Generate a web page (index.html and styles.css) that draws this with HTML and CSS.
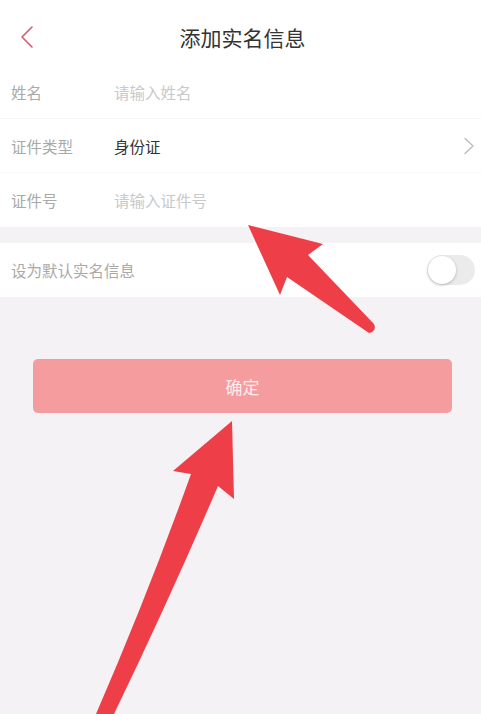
FILE: index.html
```html
<!DOCTYPE html>
<html lang="zh-CN">
<head>
<meta charset="utf-8">
<title>添加实名信息</title>
<link rel="stylesheet" href="styles.css">
</head>
<body>
<div class="page">
  <header class="topbar">
    <svg class="back" width="16" height="24" viewBox="0 0 16 24"><path d="M12 2 L2 12 L12 22" fill="none" stroke="#d45c70" stroke-width="1.6" stroke-linecap="round" stroke-linejoin="round"/></svg>
    <h1 class="title">添加实名信息</h1>
  </header>
  <section class="group">
    <div class="row">
      <span class="label">姓名</span>
      <span class="placeholder">请输入姓名</span>
    </div>
    <div class="row">
      <span class="label">证件类型</span>
      <span class="value">身份证</span>
      <svg class="chev" width="12" height="18" viewBox="0 0 12 18"><path d="M2 1.5 L10 9 L2 16.5" fill="none" stroke="#bdbdbd" stroke-width="1.4" stroke-linecap="round" stroke-linejoin="round"/></svg>
    </div>
    <div class="row last">
      <span class="label">证件号</span>
      <span class="placeholder">请输入证件号</span>
    </div>
  </section>
  <section class="group toggle-group">
    <div class="row last">
      <span class="label wide">设为默认实名信息</span>
      <span class="switch"><span class="knob"></span></span>
    </div>
  </section>
  <div class="btn">确定</div>
  <svg class="arrows" width="481" height="714" viewBox="0 0 481 714">
    <path d="M248 225 L323 244 L308 255 L374 324 Q377 331 369 333 L287 277 L280 295 Z" fill="#ee3e48"/>
    <path d="M232 421 L234 499 L218 486 Q170 598 114 714 L96 714 Q148 594 191 474 L173 471 Z" fill="#ee3e48"/>
  </svg>
</div>
</body>
</html>
```

FILE: styles.css
```css
* { box-sizing: border-box; }
html, body { margin: 0; padding: 0; }
body {
  background: #f4f2f4;
  font-family: "Noto Sans CJK SC", "Noto Sans", sans-serif;
}
.page {
  position: relative;
  width: 481px;
  height: 714px;
  overflow: hidden;
  background: #f4f2f4;
}
.topbar {
  height: 65px;
  background: #fff;
  display: flex;
  align-items: center;
  justify-content: center;
  padding-top: 10px;
  position: relative;
}
.back {
  position: absolute;
  left: 20px;
  top: 25px;
}
.title {
  margin: 0;
  font-size: 21px;
  font-weight: 400;
  color: #333;
  line-height: 1;
  padding-left: 4px;
}
.group { background: #fff; }
.toggle-group { margin-top: 16px; }
.row {
  height: 54px;
  display: flex;
  align-items: center;
  padding: 0 8px 0 11px;
  border-bottom: 1px solid #f7f7f7;
}
.row.last { border-bottom: none; }
.label {
  width: 103px;
  flex: none;
  font-size: 15.5px;
  color: #a9a9a9;
}
.label.wide { width: auto; flex: 1; }
.placeholder {
  font-size: 15.5px;
  color: #c9c9c9;
}
.value {
  flex: 1;
  font-size: 15.5px;
  color: #333;
}
.chev { margin-left: auto; margin-right: -2px; }
.switch {
  width: 48px;
  height: 30px;
  border-radius: 15px;
  background: #ebebeb;
  display: flex;
  align-items: center;
  padding: 1px;
  margin-right: -2px;
}
.knob {
  width: 28px;
  height: 28px;
  border-radius: 50%;
  background: #fff;
  box-shadow: 0 1px 3px rgba(0,0,0,0.25);
}
.btn {
  margin: 62px 29px 0 33px;
  height: 54px;
  border-radius: 5px;
  background: #f59d9e;
  color: #fdeced;
  font-size: 17px;
  display: flex;
  align-items: center;
  justify-content: center;
}
.arrows {
  position: absolute;
  left: 0;
  top: 0;
  pointer-events: none;
}
```
